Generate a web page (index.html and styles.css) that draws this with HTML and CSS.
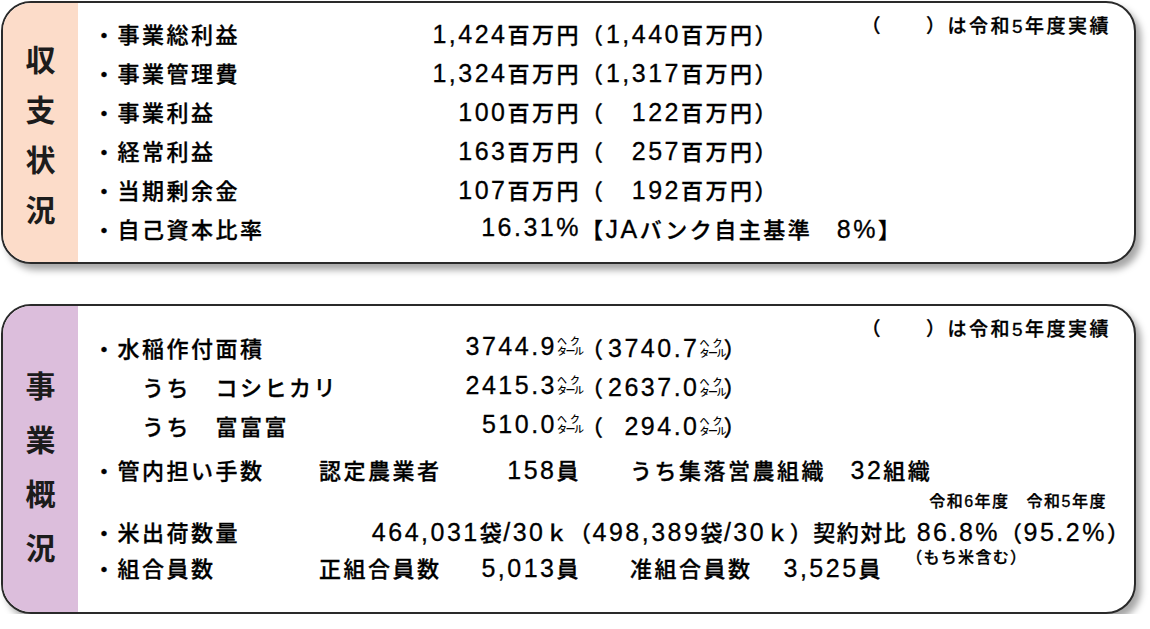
FILE: index.html
```html
<!DOCTYPE html>
<html lang="ja">
<head>
    <meta charset="UTF-8">
    <title>収支状況・事業概況</title>
    <link rel="stylesheet" href="styles.css">
</head>
<body>

    <!-- 収支状況 -->
    <section class="card card-income">
        <div class="side side-peach"><span>収</span><span>支</span><span>状</span><span>況</span></div>
        <div class="body">
            <p class="note">（　　）は令和5年度実績</p>
            <div class="row"><span>・事業総利益</span><span class="val"><span class="n">1,424</span>百万円</span><span>（<span class="inner"><span class="n">1,440</span>百万円</span>）</span></div>
            <div class="row"><span>・事業管理費</span><span class="val"><span class="n">1,324</span>百万円</span><span>（<span class="inner"><span class="n">1,317</span>百万円</span>）</span></div>
            <div class="row"><span>・事業利益</span><span class="val"><span class="n">100</span>百万円</span><span>（<span class="inner"><span class="n">122</span>百万円</span>）</span></div>
            <div class="row"><span>・経常利益</span><span class="val"><span class="n">163</span>百万円</span><span>（<span class="inner"><span class="n">257</span>百万円</span>）</span></div>
            <div class="row"><span>・当期剰余金</span><span class="val"><span class="n">107</span>百万円</span><span>（<span class="inner"><span class="n">192</span>百万円</span>）</span></div>
            <div class="row"><span>・自己資本比率</span><span class="val"><span class="n">16.31%</span></span><span>【<span class="n">JA</span>バンク自主基準　<span class="n">8%</span>】</span></div>
        </div>
    </section>

    <!-- 事業概況 -->
    <section class="card card-business">
        <div class="side side-lilac"><span>事</span><span>業</span><span>概</span><span>況</span></div>
        <div class="body">
            <p class="note">（　　）は令和5年度実績</p>
            <div class="row"><span>・水稲作付面積</span><span class="val"><span class="n">3744.9</span><span class="ha"><span class="ha-top">ヘク</span>タール</span></span><span>（<span class="inner inner-ha"><span class="n">3740.7</span><span class="ha"><span class="ha-top">ヘク</span>タール</span></span>）</span></div>
            <div class="row"><span class="indent">うち　コシヒカリ</span><span class="val"><span class="n">2415.3</span><span class="ha"><span class="ha-top">ヘク</span>タール</span></span><span>（<span class="inner inner-ha"><span class="n">2637.0</span><span class="ha"><span class="ha-top">ヘク</span>タール</span></span>）</span></div>
            <div class="row"><span class="indent">うち　富富富</span><span class="val"><span class="n">510.0</span><span class="ha"><span class="ha-top">ヘク</span>タール</span></span><span>（<span class="inner inner-ha"><span class="n">294.0</span><span class="ha"><span class="ha-top">ヘク</span>タール</span></span>）</span></div>

            <div class="row row-split row-gap">
                <span>・管内担い手数</span>
                <span class="pair"><span>認定農業者</span><span><span class="n">158</span>員</span></span>
                <span class="rest">うち集落営農組織　<span class="n">32</span>組織</span>
            </div>

            <div class="row-head"><span>令和6年度</span><span class="head-gap">令和5年度</span></div>

            <div class="row row-ship">
                <span>・米出荷数量</span>
                <span class="val tight"><span class="n">464,031</span>袋<span class="n">/30</span>ｋ</span>
                <span class="tight">（<span class="n">498,389</span>袋<span class="n">/30</span>ｋ）契約対比<span class="ratio n"> 86.8%<span class="mochi">（もち米含む）</span></span>（<span class="n">95.2%</span>）</span>
            </div>

            <div class="row row-split row-last">
                <span>・組合員数</span>
                <span class="pair"><span>正組合員数</span><span><span class="n">5,013</span>員</span></span>
                <span class="rest"><span class="sub">准組合員数</span><span class="n">3,525</span>員</span>
            </div>
        </div>
    </section>

</body>
</html>
```

FILE: styles.css
```css
* { box-sizing: border-box; }
body { margin: 0; padding: 1px 0 0 1px; background: #fff; color: #000; font-family: "Liberation Sans", "Noto Sans CJK JP", sans-serif; }

.card { display: flex; width: 1135px; background: #fff; border: 2px solid #2a2a2a; border-radius: 30px; box-shadow: 5px 6px 7px rgba(0,0,0,0.35); overflow: hidden; }
.card-income { height: 263px; }
.card-business { height: 310px; margin-top: 40px; }

.side { width: 75px; flex-shrink: 0; display: flex; flex-direction: column; align-items: center; justify-content: center; font-family: "Noto Sans CJK JP", sans-serif; font-size: 30px; font-weight: 700; line-height: 50px; color: #1c1c1c; }
.side-peach { background: #fcdcc9; }
.side-lilac { background: #dcbedc; line-height: 54px; padding-top: 12px; }

.body { flex: 1; min-width: 0; position: relative; padding: 10px 0 0 15px; font-size: 22px; font-weight: 500; letter-spacing: 2.5px; white-space: nowrap; -webkit-text-stroke: 0.3px #000; }
.card-business .body { padding-top: 21px; }

.note { position: absolute; top: 13px; right: 23px; margin: 0; font-size: 19px; line-height: 22px; letter-spacing: 2.5px; }

.row { display: grid; grid-template-columns: 300px 188px auto; align-items: center; height: 39px; }
.val { text-align: right; }
.inner { display: inline-block; width: 149px; text-align: right; }
.inner-ha { width: 118px; }
.indent { padding-left: 49px; }
.n { font-size: 25px; font-weight: 400; letter-spacing: 2.5px; }

/* ヘクタール */
.ha { display: inline-block; width: 24px; font-size: 10px; line-height: 10px; letter-spacing: -1.5px; text-align: left; -webkit-text-stroke: 0; }
.ha-top { display: block; letter-spacing: 0; text-align: justify; text-align-last: justify; padding-right: 1px; }

.row-split { grid-template-columns: 226px 262px auto; }
.row-gap { margin-top: 5px; }
.row-last { margin-top: -3px; }
.pair { display: flex; justify-content: space-between; }
.rest { padding-left: 49px; }
.sub { margin-right: 31px; }

.row-ship { grid-template-columns: 276px 200px auto; }
.tight { letter-spacing: 1.5px; }
.tight .n { letter-spacing: 2.5px; }

.row-head { display: flex; justify-content: flex-end; height: 23px; padding: 4px 27px 0 0; font-size: 16px; line-height: 20px; letter-spacing: 1.5px; }
.head-gap { margin-left: 17px; }

.ratio { position: relative; }
.mochi { position: absolute; left: -1px; top: 31px; font-size: 16px; line-height: 18px; letter-spacing: 1.3px; font-weight: 500; }
```
